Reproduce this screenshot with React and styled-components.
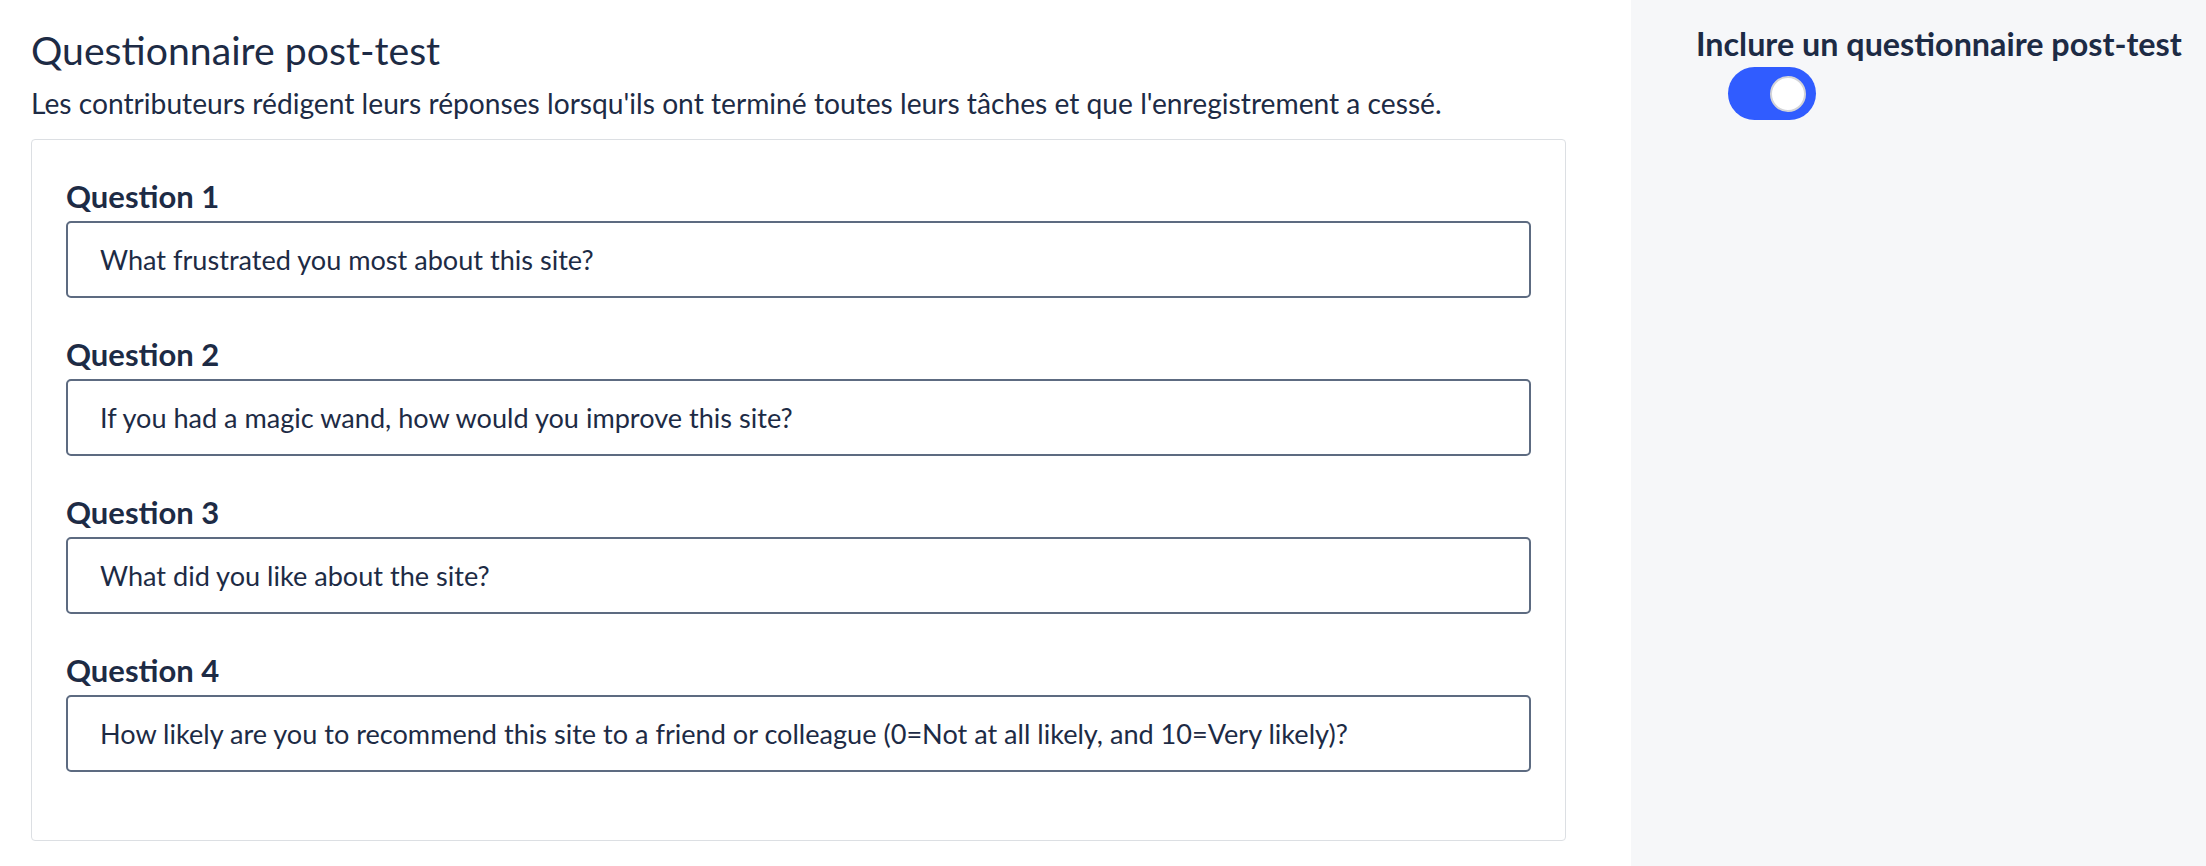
import styled, { createGlobalStyle } from "styled-components";

const GlobalStyle = createGlobalStyle`
  html, body {
    margin: 0;
    padding: 0;
    background: #ffffff;
  }
  body {
    font-family: Lato, "Open Sans", Arial, sans-serif;
    color: #1d2b45;
  }
`;

const Page = styled.div`
  display: flex;
  width: 100%;
  height: 100vh;
`;

const Main = styled.main`
  flex: 1;
  padding: 28px 65px 0 31px;
  background: #ffffff;
`;

const Title = styled.h1`
  margin: 0;
  font-size: 39.2px;
  line-height: 44px;
  font-weight: 400;
  color: #1d2b45;
`;

const Subtitle = styled.p`
  margin: 16px 0 21px;
  font-size: 28.2px;
  line-height: 30px;
  color: #1d2b45;
`;

const Card = styled.div`
  border: 1px solid #dcdfe3;
  border-radius: 4px;
  padding: 39px 34px 29px;
  background: #ffffff;
`;

const Group = styled.div`
  display: flex;
  flex-direction: column;
  margin-bottom: 39px;
`;

const Label = styled.label`
  font-size: 31px;
  line-height: 34px;
  font-weight: 700;
  margin-bottom: 8px;
  color: #1d2b45;
`;

const Input = styled.input`
  box-sizing: border-box;
  height: 77px;
  width: 100%;
  padding: 0 32px;
  border: 2px solid #5d6b81;
  border-radius: 5px;
  font-family: inherit;
  font-size: 27.1px;
  color: #1d2b45;
  background: #ffffff;
  outline: none;
`;

const Side = styled.aside`
  width: 575px;
  flex-shrink: 0;
  box-sizing: border-box;
  padding: 28px 20px 0 65px;
  background: #f6f7f9;
`;

const SideLabel = styled.div`
  font-size: 32.3px;
  line-height: 32px;
  font-weight: 700;
  color: #1d2b45;
  white-space: nowrap;
`;

const Toggle = styled.button`
  display: flex;
  align-items: center;
  justify-content: ${(p) => (p.$on ? "flex-end" : "flex-start")};
  box-sizing: border-box;
  width: 88px;
  height: 53px;
  margin: 7px 0 0 32px;
  padding: 0 10px;
  border: none;
  border-radius: 27px;
  background: ${(p) => (p.$on ? "#305cff" : "#c5cad3")};
  cursor: pointer;
`;

const Knob = styled.span`
  box-sizing: border-box;
  width: 36px;
  height: 36px;
  border-radius: 50%;
  background: #ffffff;
  border: 2px solid #d3d4d8;
`;

const questions = [
  "What frustrated you most about this site?",
  "If you had a magic wand, how would you improve this site?",
  "What did you like about the site?",
  "How likely are you to recommend this site to a friend or colleague (0=Not at all likely, and 10=Very likely)?",
];

export default function App() {
  return (
    <Page>
      <GlobalStyle />
      <Main>
        <Title>Questionnaire post-test</Title>
        <Subtitle>
          Les contributeurs rédigent leurs réponses lorsqu'ils ont terminé toutes leurs tâches et que l'enregistrement a cessé.
        </Subtitle>
        <Card>
          {questions.map((q, i) => (
            <Group key={i}>
              <Label>Question {i + 1}</Label>
              <Input defaultValue={q} />
            </Group>
          ))}
        </Card>
      </Main>
      <Side>
        <SideLabel>Inclure un questionnaire post-test</SideLabel>
        <Toggle $on aria-label="Inclure un questionnaire post-test">
          <Knob />
        </Toggle>
      </Side>
    </Page>
  );
}
